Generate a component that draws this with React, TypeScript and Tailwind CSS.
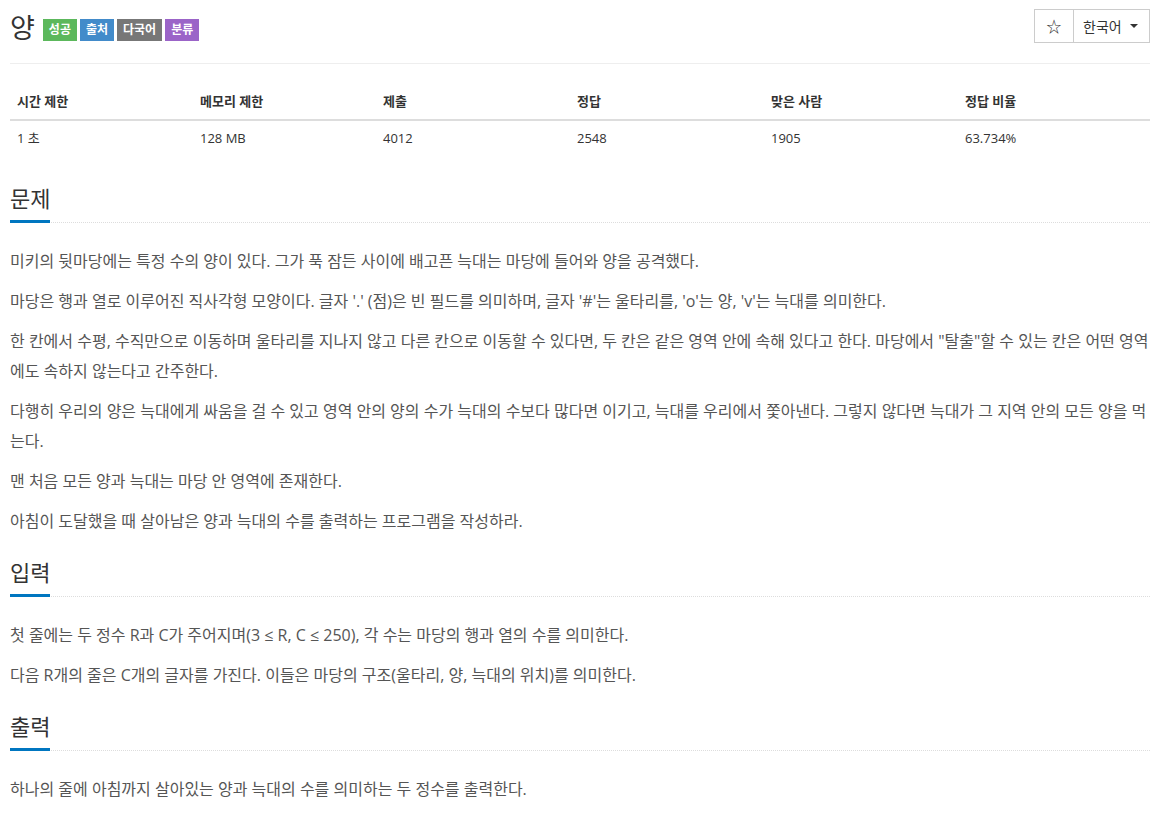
const stats = [
  { head: "시간 제한", value: "1 초", w: "w-[183px]" },
  { head: "메모리 제한", value: "128 MB", w: "w-[183px]" },
  { head: "제출", value: "4012", w: "w-[194px]" },
  { head: "정답", value: "2548", w: "w-[194px]" },
  { head: "맞은 사람", value: "1905", w: "w-[194px]" },
  { head: "정답 비율", value: "63.734%", w: "flex-1" },
];

const labels = [
  { text: "성공", cls: "bg-[#5cb85c]" },
  { text: "출처", cls: "bg-[#428bca]" },
  { text: "다국어", cls: "bg-[#777777]" },
  { text: "분류", cls: "bg-[#9b64c8]" },
];

function SectionTitle({ children }: { children: string }) {
  return (
    <div className="mt-[21px] flex items-end border-b border-dotted border-[#dddddd]">
      <h2 className="-mb-px border-b-[3px] border-[#0076c0] pb-[7px] text-[22px] leading-[30px] text-[#333333]">
        {children}
      </h2>
    </div>
  );
}

function Body({ children }: { children: React.ReactNode }) {
  return <div className="pt-[23px] text-[16px] leading-[30px] text-[#555555]">{children}</div>;
}

export default function App() {
  return (
    <div
      className="min-h-screen bg-white text-[#333333]"
      style={{ fontFamily: '"Open Sans", "Noto Sans CJK KR", sans-serif' }}
    >
      <div className="ml-[10px] w-[1140px]">
        <div className="flex items-start justify-between border-b border-[#eeeeee] pb-[18px] pt-[9px]">
          <div className="flex items-center gap-[3px] pt-[2px]">
            <span className="mr-[5px] text-[27px] leading-[34px] text-[#333333]">양</span>
            {labels.map((l) => (
              <span
                key={l.text}
                className={`${l.cls} mt-[4px] px-[6px] text-[12px] font-bold leading-[22px] text-white`}
              >
                {l.text}
              </span>
            ))}
          </div>
          <div className="flex h-[34px] border border-[#cccccc] text-[14px] text-[#333333]">
            <button className="flex w-[39px] items-center justify-center border-r border-[#cccccc] text-[15px]">
              ☆
            </button>
            <button className="flex w-[75px] items-center gap-[8px] pl-[9px]">
              한국어
              <svg width="8" height="4" viewBox="0 0 8 4">
                <path d="M0 0h8L4 4z" fill="#333" />
              </svg>
            </button>
          </div>
        </div>

        <div className="mt-[20px] pb-[6px] text-[13px] leading-[19px]">
          <div className="flex border-b-2 border-[#dddddd]">
            {stats.map((s) => (
              <div key={s.head} className={`${s.w} px-[7px] py-[8px] font-bold`}>
                {s.head}
              </div>
            ))}
          </div>
          <div className="flex">
            {stats.map((s) => (
              <div key={s.head} className={`${s.w} px-[7px] py-[8px]`}>
                {s.value}
              </div>
            ))}
          </div>
        </div>

        <SectionTitle>문제</SectionTitle>
        <Body>
          <p className="mb-[10px]">
            미키의 뒷마당에는 특정 수의 양이 있다. 그가 푹 잠든 사이에 배고픈 늑대는 마당에 들어와 양을 공격했다.
          </p>
          <p className="mb-[10px]">
            마당은 행과 열로 이루어진 직사각형 모양이다. 글자 '.' (점)은 빈 필드를 의미하며, 글자 '#'는 울타리를, 'o'는 양, 'v'는 늑대를 의미한다.
          </p>
          <p className="mb-[10px]">
            한 칸에서 수평, 수직만으로 이동하며 울타리를 지나지 않고 다른 칸으로 이동할 수 있다면, 두 칸은 같은 영역 안에 속해 있다고 한다. 마당에서 "탈출"할 수 있는 칸은 어떤 영역에도 속하지 않는다고 간주한다.
          </p>
          <p className="mb-[10px]">
            다행히 우리의 양은 늑대에게 싸움을 걸 수 있고 영역 안의 양의 수가 늑대의 수보다 많다면 이기고, 늑대를 우리에서 쫓아낸다. 그렇지 않다면 늑대가 그 지역 안의 모든 양을 먹는다.
          </p>
          <p className="mb-[10px]">맨 처음 모든 양과 늑대는 마당 안 영역에 존재한다.</p>
          <p className="mb-[10px]">아침이 도달했을 때 살아남은 양과 늑대의 수를 출력하는 프로그램을 작성하라.</p>
        </Body>

        <SectionTitle>입력</SectionTitle>
        <Body>
          <p className="mb-[10px]">
            첫 줄에는 두 정수 R과 C가 주어지며(3 ≤ R, C ≤ 250), 각 수는 마당의 행과 열의 수를 의미한다.
          </p>
          <p className="mb-[10px]">
            다음 R개의 줄은 C개의 글자를 가진다. 이들은 마당의 구조(울타리, 양, 늑대의 위치)를 의미한다.
          </p>
        </Body>

        <SectionTitle>출력</SectionTitle>
        <Body>
          <p className="mb-[10px]">하나의 줄에 아침까지 살아있는 양과 늑대의 수를 의미하는 두 정수를 출력한다.</p>
        </Body>
      </div>
    </div>
  );
}
